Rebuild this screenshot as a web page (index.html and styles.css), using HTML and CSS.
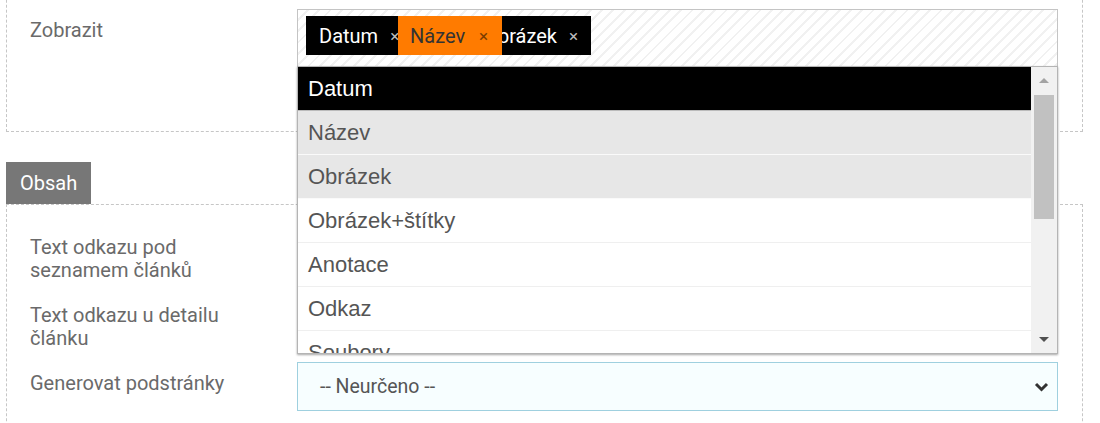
FILE: index.html
```html
<!DOCTYPE html>
<html lang="cs">

<head>
    <meta charset="UTF-8">
    <meta name="viewport" content="width=device-width, initial-scale=1.0">
    <title>Nastavení</title>
    <link rel="stylesheet" href="styles.css">
</head>

<body>
    <div class="page">
        <div class="box box-top">
            <div class="row">
                <div class="label">Zobrazit</div>
                <div class="field multi">
                    <div class="choices">
                        <div class="tags">
                            <span class="tag">Datum<i>&times;</i></span>
                            <span class="tag tag-last">Obrázek<i>&times;</i></span>
                            <span class="tag tag-drag">Název<i>&times;</i></span>
                        </div>
                    </div>
                    <div class="dropdown">
                        <ul class="options">
                            <li class="active">Datum</li>
                            <li class="picked">Název</li>
                            <li class="picked">Obrázek</li>
                            <li>Obrázek+štítky</li>
                            <li>Anotace</li>
                            <li>Odkaz</li>
                            <li>Soubory</li>
                        </ul>
                        <div class="scrollbar">
                            <span class="arrow-up"></span>
                            <span class="thumb"></span>
                            <span class="arrow-down"></span>
                        </div>
                    </div>
                </div>
            </div>
        </div>

        <div class="tab">Obsah</div>
        <div class="box box-content">
            <div class="row">
                <div class="label">Text odkazu pod seznamem článků</div>
                <div class="field"><input class="input" type="text"></div>
            </div>
            <div class="row">
                <div class="label">Text odkazu u detailu článku</div>
                <div class="field"><input class="input" type="text"></div>
            </div>
            <div class="row">
                <div class="label">Generovat podstránky</div>
                <div class="field">
                    <div class="select">
                        <span>-- Neurčeno --</span>
                        <svg width="15" height="10" viewBox="0 0 15 10">
                            <polyline points="2,2 7.5,7.5 13,2" fill="none" stroke="#333" stroke-width="3" />
                        </svg>
                    </div>
                </div>
            </div>
        </div>
    </div>
</body>

</html>
```

FILE: styles.css
```css
body {
    margin: 0;
    font-family: Roboto, "Liberation Sans", sans-serif;
    color: #666;
    background: #fff;
    overflow: hidden;
}

.page {
    width: 1077px;
    margin-left: 6px;
}

.box {
    box-sizing: border-box;
    border: 1px dashed #c6c6c6;
    padding: 0 24px 0 23px;
}

.box-top {
    margin-top: -40px;
    height: 172px;
    padding-top: 48px;
}

.box-content {
    padding-top: 21px;
    padding-bottom: 60px;
}

.row {
    display: flex;
    height: 49px;
    margin-bottom: 19px;
}

.label {
    width: 267px;
    padding: 10px 40px 0 0;
    box-sizing: border-box;
    font-size: 20px;
    line-height: 23px;
    color: #6a6a6a;
}

.field {
    width: 761px;
}

.multi {
    position: relative;
}

.choices {
    box-sizing: border-box;
    height: 58px;
    padding: 6px 8px;
    border: 1px solid #c4c4c4;
    background: repeating-linear-gradient(135deg, #fff 0, #fff 6px, #f1f1f1 6px, #f1f1f1 8px);
}

.tags {
    position: relative;
    display: flex;
    width: 285px;
    height: 39px;
    background: #000;
}

.tag {
    display: flex;
    align-items: center;
    padding: 0 13px;
    font-size: 20px;
    color: #fff;
}

.tag i {
    font-style: normal;
    font-size: 17px;
    color: #bbb;
    margin-left: 12px;
}

.tag-last {
    margin-left: auto;
}

.tag-drag {
    position: absolute;
    left: 92px;
    top: 0;
    width: 104px;
    height: 39px;
    box-sizing: border-box;
    padding-left: 12px;
    background: #ff7b00;
    color: #333;
}

.tag-drag i {
    color: #7a3c00;
    margin-left: 14px;
}

.dropdown {
    position: absolute;
    z-index: 2;
    top: 57px;
    left: 0;
    right: 0;
    height: 288px;
    box-sizing: border-box;
    border: 1px solid #b4b4b4;
    background: #fff;
    box-shadow: 0 1px 2px rgba(0, 0, 0, .35);
    overflow: hidden;
}

.options {
    list-style: none;
    margin: 0;
    padding: 0;
    margin-right: 26px;
}

.options li {
    height: 44px;
    box-sizing: border-box;
    padding: 0 10px;
    border-bottom: 1px solid #efefef;
    font-family: "Liberation Sans", Arial, sans-serif;
    font-size: 22px;
    line-height: 43px;
    color: #555;
}

.options .active {
    background: #000;
    color: #fff;
    border-bottom-color: #bbb;
}

.options .picked {
    background: #e7e7e7;
    border-bottom-color: #fafafa;
}

.scrollbar {
    position: absolute;
    top: 0;
    right: 0;
    bottom: 0;
    width: 26px;
    background: #f1f1f1;
}

.thumb {
    position: absolute;
    top: 28px;
    left: 3px;
    width: 20px;
    height: 124px;
    background: #c1c1c1;
}

.arrow-up,
.arrow-down {
    position: absolute;
    left: 8px;
    width: 0;
    height: 0;
    border-left: 5px solid transparent;
    border-right: 5px solid transparent;
}

.arrow-up {
    top: 11px;
    border-bottom: 5px solid #a3a3a3;
}

.arrow-down {
    bottom: 11px;
    border-top: 5px solid #505050;
}

.input {
    display: block;
    width: 100%;
    height: 49px;
    box-sizing: border-box;
    border: 1px solid #a6d5e3;
    background: #f7feff;
}

.select {
    display: flex;
    align-items: center;
    justify-content: space-between;
    height: 49px;
    box-sizing: border-box;
    padding: 0 8px 0 22px;
    border: 1px solid #9fd0df;
    background: #f7feff;
    font-size: 19.5px;
    color: #555;
}

.tab {
    display: inline-block;
    margin-top: 30px;
    height: 42px;
    padding: 0 14px;
    background: #777;
    color: #fff;
    font-size: 20px;
    line-height: 42px;
    vertical-align: top;
}
```
